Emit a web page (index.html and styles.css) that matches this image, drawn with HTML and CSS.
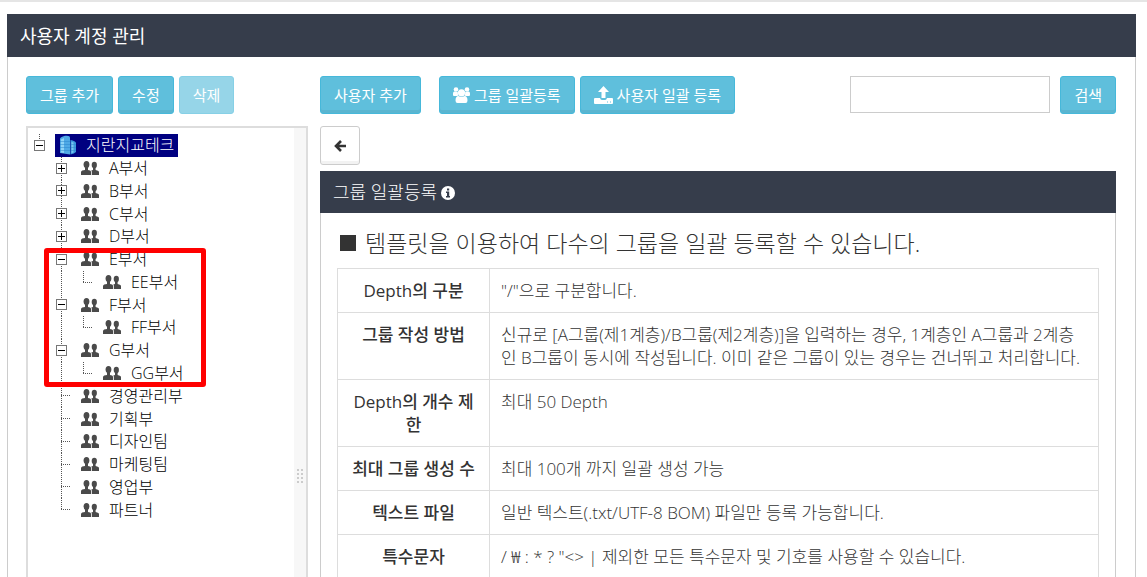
FILE: index.html
```html
<!DOCTYPE html>
<html lang="ko">
<head>
  <meta charset="UTF-8">
  <meta name="viewport" content="width=device-width, initial-scale=1.0">
  <title>사용자 계정 관리</title>
  <link rel="stylesheet" href="styles.css">
</head>
<body>
  <svg class="symbols" width="0" height="0" aria-hidden="true">
    <symbol id="icon-group" viewBox="0 0 18 14">
      <ellipse cx="5.500" cy="3.600" rx="2.900" ry="3.500"/>
      <path d="M4 6h3v3l2 .6q1 .4 1 1.500V14H0v-2.700q0-1.300 1.200-1.700L4 9z"/>
      <ellipse cx="13.300" cy="4" rx="2.600" ry="3.200"/>
      <path d="M12 6h2.600v3l2.200.7q1.200.4 1.200 1.600V14h-7.200v-3q0-.9-.6-1.400L12 9z"/>
    </symbol>
  </svg>

  <main class="panel">
    <h1 class="panel-title">사용자 계정 관리</h1>

    <div class="panel-body">
      <aside class="sidebar">
        <div class="toolbar">
          <button type="button" class="btn">그룹 추가</button>
          <button type="button" class="btn">수정</button>
          <button type="button" class="btn" disabled>삭제</button>
        </div>

        <div class="tree-box">
          <ul class="tree">
            <li>
              <span class="guide root"><button type="button" class="toggle" aria-label="접기"></button></span>
              <span class="node selected">
                <svg class="company" viewBox="0 0 18 20" aria-hidden="true">
                  <path fill="#4fa9e6" d="M1 4q0-2 5-3.200Q11 0 11 3v16.500L1 18z"/>
                  <path fill="#8fd3f7" d="M2 4.500l3-1.500v15l-3-.5z"/>
                  <path fill="#3c9ade" d="M11.500 5q5 1 5.500 3v9q-1.500 1.500-5.500 2.500z"/>
                  <path fill="#7cc6f2" d="M12.500 7l2 .6v10l-2 .6z"/>
                  <path stroke="#2b86cc" stroke-opacity="0.500" d="M1 6.500h10M1 9.500h10M1 12.500h10M1 15.500h10M12 9.500h5M12 12.500h5M12 15.500h5"/>
                </svg>
                지란지교테크
              </span>
            </li>
            <li>
              <span class="guide"><button type="button" class="toggle plus" aria-label="펼치기"></button></span>
              <span class="node"><svg class="group"><use href="#icon-group"/></svg>A부서</span>
            </li>
            <li>
              <span class="guide"><button type="button" class="toggle plus" aria-label="펼치기"></button></span>
              <span class="node"><svg class="group"><use href="#icon-group"/></svg>B부서</span>
            </li>
            <li>
              <span class="guide"><button type="button" class="toggle plus" aria-label="펼치기"></button></span>
              <span class="node"><svg class="group"><use href="#icon-group"/></svg>C부서</span>
            </li>
            <li>
              <span class="guide"><button type="button" class="toggle plus" aria-label="펼치기"></button></span>
              <span class="node"><svg class="group"><use href="#icon-group"/></svg>D부서</span>
            </li>
            <li>
              <span class="guide"><button type="button" class="toggle" aria-label="접기"></button></span>
              <span class="node"><svg class="group"><use href="#icon-group"/></svg>E부서</span>
            </li>
            <li>
              <span class="guide"></span><span class="guide elbow"></span>
              <span class="node"><svg class="group"><use href="#icon-group"/></svg>EE부서</span>
            </li>
            <li>
              <span class="guide"><button type="button" class="toggle" aria-label="접기"></button></span>
              <span class="node"><svg class="group"><use href="#icon-group"/></svg>F부서</span>
            </li>
            <li>
              <span class="guide"></span><span class="guide elbow"></span>
              <span class="node"><svg class="group"><use href="#icon-group"/></svg>FF부서</span>
            </li>
            <li>
              <span class="guide"><button type="button" class="toggle" aria-label="접기"></button></span>
              <span class="node"><svg class="group"><use href="#icon-group"/></svg>G부서</span>
            </li>
            <li>
              <span class="guide"></span><span class="guide elbow"></span>
              <span class="node"><svg class="group"><use href="#icon-group"/></svg>GG부서</span>
            </li>
            <li>
              <span class="guide tee"></span>
              <span class="node"><svg class="group"><use href="#icon-group"/></svg>경영관리부</span>
            </li>
            <li>
              <span class="guide tee"></span>
              <span class="node"><svg class="group"><use href="#icon-group"/></svg>기획부</span>
            </li>
            <li>
              <span class="guide tee"></span>
              <span class="node"><svg class="group"><use href="#icon-group"/></svg>디자인팀</span>
            </li>
            <li>
              <span class="guide tee"></span>
              <span class="node"><svg class="group"><use href="#icon-group"/></svg>마케팅팀</span>
            </li>
            <li>
              <span class="guide tee"></span>
              <span class="node"><svg class="group"><use href="#icon-group"/></svg>영업부</span>
            </li>
            <li>
              <span class="guide elbow"></span>
              <span class="node"><svg class="group"><use href="#icon-group"/></svg>파트너</span>
            </li>
          </ul>
          <div class="splitter"><span class="grip"></span></div>
          <div class="highlight"></div>
        </div>
      </aside>

      <section class="content">
        <div class="toolbar">
          <button type="button" class="btn user-add">사용자 추가</button>
          <button type="button" class="btn">
            <svg class="users" viewBox="0 0 17 16" aria-hidden="true">
              <circle cx="3" cy="2.500" r="2.300"/>
              <circle cx="14" cy="2.500" r="2.300"/>
              <path d="M0 8V6.500Q0 4.500 1.500 4.500L5 5.300Q4.500 7 5.500 8.500L4 9H1Q0 9 0 8zM17 8V6.500Q17 4.500 15.500 4.500L12 5.300Q12.500 7 11.500 8.500L13 9h3q1 0 1-1z"/>
              <circle cx="8.500" cy="5.800" r="3.600"/>
              <path d="M2.500 13.500q0-4.500 3-4.500 3 2 6 0 3 0 3 4.500 0 2.500-2 2.500h-8q-2 0-2-2.500z"/>
            </svg>
            그룹 일괄등록
          </button>
          <button type="button" class="btn">
            <svg class="upload" viewBox="0 0 19 18" aria-hidden="true">
              <path d="M9.500 0l5.500 6h-3.500v6h-4V6H4z"/>
              <path fill-rule="evenodd" d="M1 12h5q.5 2 2 2h3q1.500 0 2-2h5q1 0 1 1v4q0 1-1 1H1q-1 0-1-1v-4q0-1 1-1zm12 3.500v1h1v-1zm3 0v1h1v-1z"/>
            </svg>
            사용자 일괄 등록
          </button>
          <form class="search">
            <input type="text" aria-label="검색어">
            <button type="button" class="btn">검색</button>
          </form>
        </div>

        <button type="button" class="back" aria-label="뒤로">
          <svg viewBox="0 0 12 12" aria-hidden="true">
            <path d="M7 1L2 6l5 5M2 6h10" fill="none" stroke="#333" stroke-width="2.600"/>
          </svg>
        </button>

        <div class="inner-panel">
          <h2 class="inner-title">
            그룹 일괄등록
            <svg viewBox="0 0 14 14" aria-hidden="true">
              <circle cx="7" cy="7" r="7" fill="#fff"/>
              <path fill="#363d4b" d="M6 2.500h2.200v2H6zM5 5.500h3.200v4.500H9v1.500H5V10h1V7H5z"/>
            </svg>
          </h2>
          <div class="inner-body">
            <h3 class="guide-title"><span class="square"></span>템플릿을 이용하여 다수의 그룹을 일괄 등록할 수 있습니다.</h3>
            <table>
              <tbody>
                <tr>
                  <th scope="row">Depth의 구분</th>
                  <td>"/"으로 구분합니다.</td>
                </tr>
                <tr>
                  <th scope="row">그룹 작성 방법</th>
                  <td>신규로 [A그룹(제1계층)/B그룹(제2계층)]을 입력하는 경우, 1계층인 A그룹과 2계층인 B그룹이 동시에 작성됩니다. 이미 같은 그룹이 있는 경우는 건너뛰고 처리합니다.</td>
                </tr>
                <tr>
                  <th scope="row">Depth의 개수 제한</th>
                  <td>최대 50 Depth</td>
                </tr>
                <tr>
                  <th scope="row">최대 그룹 생성 수</th>
                  <td>최대 100개 까지 일괄 생성 가능</td>
                </tr>
                <tr>
                  <th scope="row">텍스트 파일</th>
                  <td>일반 텍스트(.txt/UTF-8 BOM) 파일만 등록 가능합니다.</td>
                </tr>
                <tr>
                  <th scope="row">특수문자</th>
                  <td>/ ₩ : * ? "&lt;&gt; | 제외한 모든 특수문자 및 기호를 사용할 수 있습니다.</td>
                </tr>
              </tbody>
            </table>
          </div>
        </div>
      </section>
    </div>
  </main>
</body>
</html>
```
FILE: styles.css
```css
* {
  box-sizing: border-box;
}

html, body {
  height: 100%;
}

body {
  margin: 0;
  padding: 12px 11px 0 7px;
  border-top: 2px solid #e5e5e5;
  background: #fff;
  color: #333;
  font-family: "Open Sans", "Noto Sans CJK KR", sans-serif;
  font-size: 17px;
  font-weight: 300;
  line-height: 23px;
  overflow: hidden;
}

button, input {
  font: inherit;
}

h1, h2, h3 {
  margin: 0;
  font-weight: 300;
}

.symbols {
  position: absolute;
}

.panel {
  display: flex;
  flex-direction: column;
  height: 100%;
}

.panel-title {
  padding: 1px 13px 0;
  background: #363d4b;
  color: #fff;
  font-size: 18px;
  font-weight: 400;
  line-height: 42px;
}

.panel-body {
  display: flex;
  flex: 1;
  gap: 12px;
  min-height: 0;
  padding: 19px 19px 0 18px;
  border: 1px solid #ccc;
  border-width: 0 1px;
}

/* Toolbars */
.toolbar {
  display: flex;
  gap: 5px;
  margin-bottom: 12px;
}

.btn {
  display: flex;
  align-items: center;
  gap: 4px;
  height: 38px;
  padding: 0 13px;
  border: 1px solid #46b8da;
  border-radius: 3px;
  background: #5fbfdc;
  box-shadow: inset 0 -3px 0 rgba(0, 0, 0, 0.05);
  color: #fff;
  font-size: 15px;
  font-weight: 400;
  white-space: nowrap;
  cursor: pointer;
}

.btn:disabled {
  opacity: 0.65;
  box-shadow: none;
}

.btn svg {
  fill: #fff;
}

.users {
  width: 17px;
  height: 16px;
}

.upload {
  width: 19px;
  height: 18px;
}

.user-add {
  margin-right: 13px;
}

.search {
  display: flex;
  gap: 10px;
  margin-left: auto;
}

.search input {
  width: 200px;
  height: 37px;
  padding: 0 12px;
  border: 1px solid #ccc;
  background: #fff;
}

/* Group tree */
.sidebar {
  display: flex;
  flex: 0 0 282px;
  flex-direction: column;
}

.tree-box {
  position: relative;
  display: flex;
  flex: 1;
  border: 2px solid #ddd;
  border-bottom: 0;
}

.tree {
  display: grid;
  flex: 1;
  align-self: flex-start;
  grid-auto-rows: 1fr;
  height: 387px;
  margin: 6px 0 0;
  padding: 0;
  color: #000;
  font-size: 16px;
  list-style: none;
}

.tree li {
  display: flex;
  padding-left: 22px;
}

.tree li:first-child {
  padding-left: 0;
}

.guide {
  display: flex;
  flex: 0 0 22px;
  align-items: center;
  justify-content: center;
  background: repeating-linear-gradient(#555 0 1px, transparent 1px 2px) 11px 0 / 1px 100% no-repeat;
}

.guide.root {
  background-size: 1px 6px;
}

.guide.tee {
  background:
    repeating-linear-gradient(#555 0 1px, transparent 1px 2px) 11px 0 / 1px 100% no-repeat,
    repeating-linear-gradient(90deg, #555 0 1px, transparent 1px 2px) 11px 11px / 9px 1px no-repeat;
}

.guide.elbow {
  background:
    repeating-linear-gradient(#555 0 1px, transparent 1px 2px) 11px 0 / 1px 12px no-repeat,
    repeating-linear-gradient(90deg, #555 0 1px, transparent 1px 2px) 11px 11px / 9px 1px no-repeat;
}

.toggle {
  width: 11px;
  height: 11px;
  padding: 0;
  border: 1px solid #777;
  background: linear-gradient(#000, #000) center / 7px 1px no-repeat, #fff;
}

.toggle.plus {
  background:
    linear-gradient(#000, #000) center / 7px 1px no-repeat,
    linear-gradient(#000, #000) center / 1px 7px no-repeat,
    #fff;
}

.node {
  display: flex;
  align-items: center;
  gap: 10px;
  margin-left: 9px;
  line-height: 22px;
}

.node.selected {
  gap: 9px;
  margin-left: 5px;
  padding: 0 4px;
  background: #000080;
  color: #fff;
}

.company {
  width: 18px;
  height: 20px;
}

.group {
  width: 18px;
  height: 14px;
  fill: #4a4a4a;
}

.splitter {
  display: flex;
  flex: 0 0 12px;
  justify-content: center;
  background: #f7f7f7;
}

.grip {
  width: 6px;
  height: 16px;
  margin-top: 341px;
  background:
    linear-gradient(#f7f7f7, #f7f7f7) center / 2px 100% no-repeat,
    repeating-linear-gradient(#ccc 0 2px, #f7f7f7 2px 4px);
}

/* Marks the nested groups */
.highlight {
  position: absolute;
  top: 120px;
  left: 16px;
  width: 162px;
  height: 139px;
  border: 5px solid #f00;
  border-radius: 3px;
  pointer-events: none;
}

/* Bulk registration */
.content {
  flex: 1;
  min-width: 0;
}

.back {
  display: flex;
  align-items: center;
  justify-content: center;
  width: 40px;
  height: 39px;
  margin-bottom: 6px;
  padding: 0;
  border: 1px solid #ccc;
  border-radius: 3px;
  background: #fff;
  box-shadow: inset 0 -3px 0 rgba(0, 0, 0, 0.05);
}

.back svg {
  width: 12px;
  height: 12px;
}

.inner-title {
  display: flex;
  align-items: center;
  gap: 4px;
  height: 42px;
  padding: 1px 13px 0;
  background: #363d4b;
  color: #fff;
  font-size: 18px;
}

.inner-title svg {
  width: 14px;
  height: 14px;
}

.inner-body {
  padding: 16px;
  border: 1px solid #ccc;
  border-top: 0;
}

.guide-title {
  display: flex;
  align-items: center;
  gap: 9px;
  margin-bottom: 11px;
  padding-left: 3px;
  font-size: 23px;
  line-height: 28px;
}

.square {
  width: 16px;
  height: 16px;
  background: #333;
}

table {
  width: 100%;
  border-collapse: collapse;
  table-layout: fixed;
}

th, td {
  padding: 10px 11px;
  border: 1px solid #ddd;
  vertical-align: top;
}

th {
  width: 152px;
  font-weight: 500;
  text-align: center;
}

td {
  text-align: left;
}
```
